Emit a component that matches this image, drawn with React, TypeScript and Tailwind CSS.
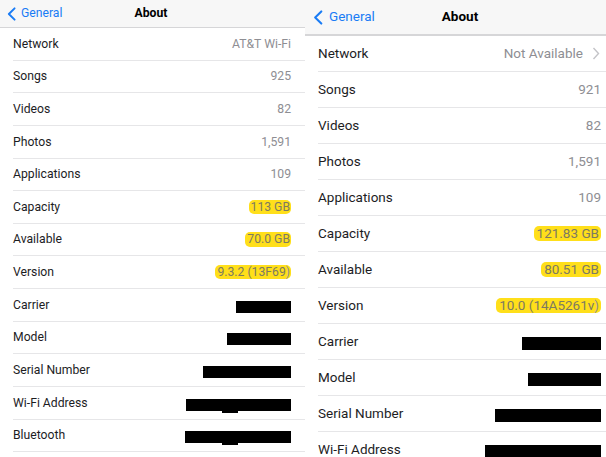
import React from 'react';

type Value =
  | { kind: 'text'; text: string; chevron?: boolean }
  | { kind: 'mark'; text: string; tail?: string }
  | { kind: 'redact'; w: number; tab?: number };

interface Row {
  label: string;
  value: Value;
}

interface PanelProps {
  rows: Row[];
  big?: boolean;
}

const leftRows: Row[] = [
  { label: 'Network', value: { kind: 'text', text: 'AT&T Wi-Fi' } },
  { label: 'Songs', value: { kind: 'text', text: '925' } },
  { label: 'Videos', value: { kind: 'text', text: '82' } },
  { label: 'Photos', value: { kind: 'text', text: '1,591' } },
  { label: 'Applications', value: { kind: 'text', text: '109' } },
  { label: 'Capacity', value: { kind: 'mark', text: '113 GB' } },
  { label: 'Available', value: { kind: 'mark', text: '70.0 GB' } },
  { label: 'Version', value: { kind: 'mark', text: '9.3.2 (13F69', tail: ')' } },
  { label: 'Carrier', value: { kind: 'redact', w: 55 } },
  { label: 'Model', value: { kind: 'redact', w: 64 } },
  { label: 'Serial Number', value: { kind: 'redact', w: 88 } },
  { label: 'Wi-Fi Address', value: { kind: 'redact', w: 105, tab: 36 } },
  { label: 'Bluetooth', value: { kind: 'redact', w: 106, tab: 37 } },
];

const rightRows: Row[] = [
  { label: 'Network', value: { kind: 'text', text: 'Not Available', chevron: true } },
  { label: 'Songs', value: { kind: 'text', text: '921' } },
  { label: 'Videos', value: { kind: 'text', text: '82' } },
  { label: 'Photos', value: { kind: 'text', text: '1,591' } },
  { label: 'Applications', value: { kind: 'text', text: '109' } },
  { label: 'Capacity', value: { kind: 'mark', text: '121.83 GB' } },
  { label: 'Available', value: { kind: 'mark', text: '80.51 GB' } },
  { label: 'Version', value: { kind: 'mark', text: '10.0 (14A5261v', tail: ')' } },
  { label: 'Carrier', value: { kind: 'redact', w: 79 } },
  { label: 'Model', value: { kind: 'redact', w: 73 } },
  { label: 'Serial Number', value: { kind: 'redact', w: 106 } },
  { label: 'Wi-Fi Address', value: { kind: 'redact', w: 116 } },
];

const BackChevron: React.FC<{ big?: boolean }> = ({ big }) => (
  <svg
    className={big ? 'w-[10px] h-[15px]' : 'w-[9px] h-[14px]'}
    viewBox="0 0 10 16"
    fill="none"
    stroke="#1a7cf5"
    strokeWidth={2.2}
    strokeLinecap="round"
    strokeLinejoin="round"
  >
    <path d="M8.5 1.5 L2 8 L8.5 14.5" />
  </svg>
);

const ValueCell: React.FC<{ value: Value; big?: boolean }> = ({ value, big }) => {
  if (value.kind === 'text') {
    return (
      <span className="flex items-center text-[#8e8e93]">
        {value.text}
        {value.chevron && (
          <svg className="w-[8px] h-[13px] ml-[9px] mr-[1px]" viewBox="0 0 8 13" fill="none" stroke="#c4c4c8" strokeWidth={1.4}>
            <path d="M1.5 1 L6.5 6.5 L1.5 12" />
          </svg>
        )}
      </span>
    );
  }
  if (value.kind === 'mark') {
    return (
      <span className="flex items-center text-[#7d7a62]">
        <span className={`bg-[#ffdf1a] rounded-[5px] ${big ? 'pl-[3px] pr-[2px] py-[1px]' : 'pl-[2px] pr-[1px] py-[1px]'}`}>
          {value.text}
          {value.tail && <span className="text-[#8e8e93]">{value.tail}</span>}
        </span>
      </span>
    );
  }
  return (
    <span className={`relative inline-block bg-black mt-[4px] ${big ? 'h-[13px]' : 'h-[12px]'}`} style={{ width: value.w }}>
      {value.tab !== undefined && (
        <span className="absolute top-full h-[2px] w-[16px] bg-black" style={{ left: value.tab }} />
      )}
    </span>
  );
};

const Panel: React.FC<PanelProps> = ({ rows, big }) => (
  <div className={`flex flex-col h-[457px] overflow-hidden bg-white ${big ? 'flex-1 text-[13.5px]' : 'w-[305px] text-[12.2px]'}`}>
    <div
      className={`relative flex items-center shrink-0 bg-[#f7f7f7] border-b border-[#d6d6d8] ${
        big ? 'h-[36px] pl-[8px] border-b-2' : 'h-[28px] pl-[7px]'
      }`}
    >
      <BackChevron big={big} />
      <span className={`text-[#1a7cf5] ${big ? 'ml-[6px]' : 'ml-[5px]'}`}>General</span>
      <span className={`absolute font-bold text-black -translate-x-1/2 ${big ? 'left-[155px]' : 'left-[151px]'}`}>About</span>
    </div>
    <div className={big ? 'pl-[13px]' : 'pl-[13px]'}>
      {rows.map((row) => (
        <div
          key={row.label}
          className={`flex items-center justify-between border-b border-[#e6e6e8] ${
            big ? 'h-[36px] pr-[5px]' : 'h-[32.63px] pr-[14px]'
          }`}
        >
          <span className="text-[#1d1d1f]">{row.label}</span>
          <ValueCell value={row.value} big={big} />
        </div>
      ))}
    </div>
  </div>
);

export default function App() {
  return (
    <div className="flex w-[606px] h-[457px] overflow-hidden bg-white font-['Roboto',sans-serif] leading-none">
      <Panel rows={leftRows} />
      <Panel rows={rightRows} big />
    </div>
  );
}
